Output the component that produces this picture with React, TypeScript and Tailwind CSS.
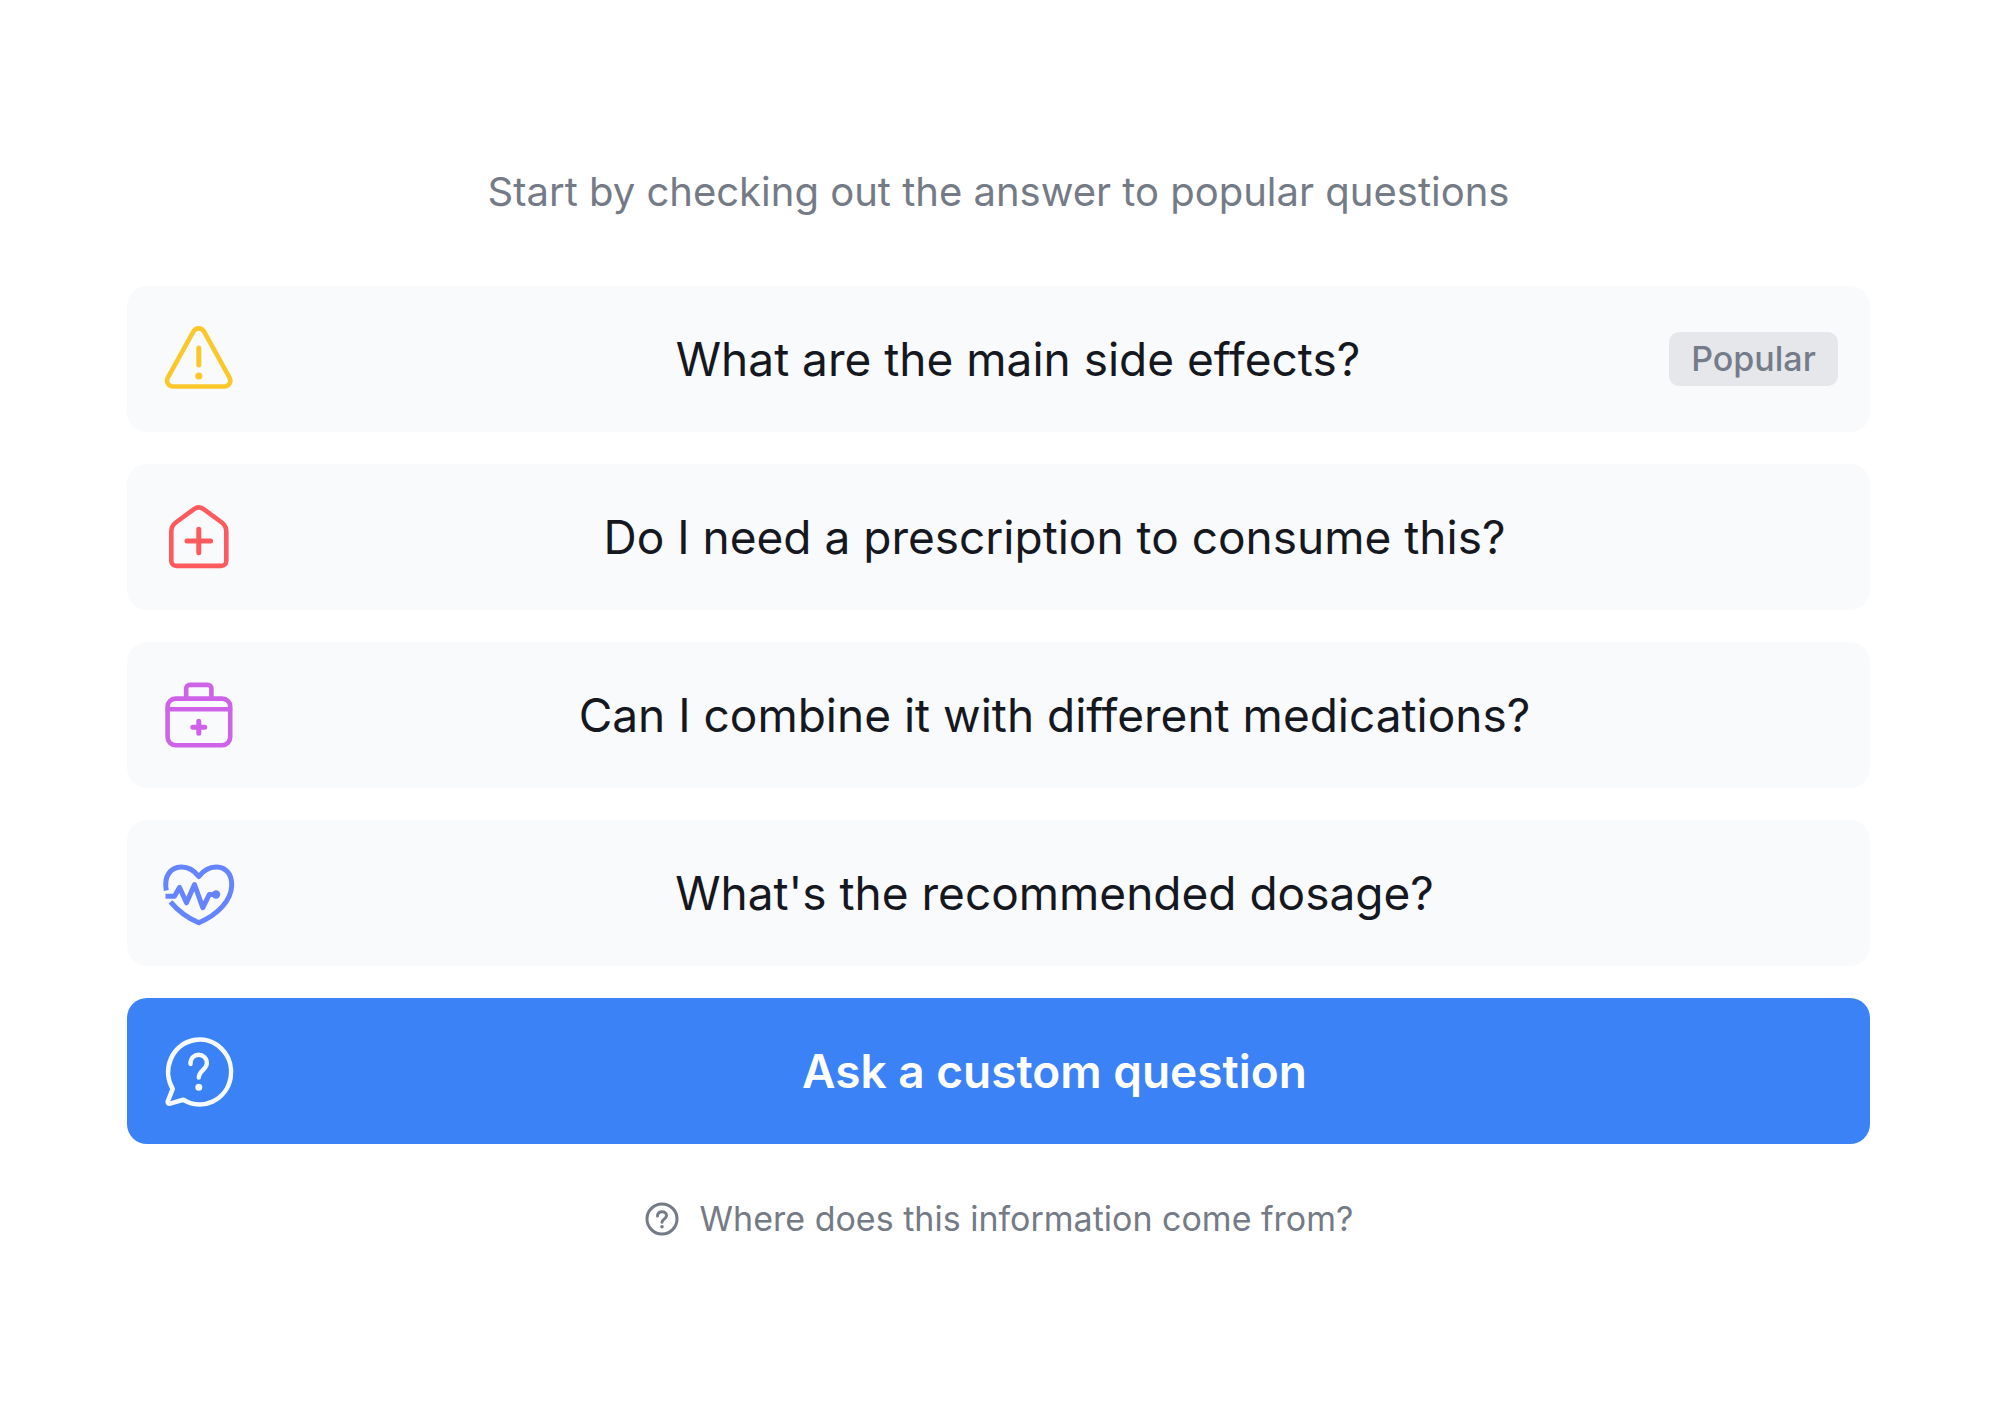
import type { ReactNode } from "react";

function Icon({ className, children }: { className: string; children: ReactNode }) {
  return (
    <svg
      viewBox="0 0 80 80"
      fill="none"
      stroke="currentColor"
      strokeWidth="4.6"
      strokeLinecap="round"
      strokeLinejoin="round"
      aria-hidden="true"
      className={`size-20 shrink-0 ${className}`}
    >
      {children}
    </svg>
  );
}

const WarningIcon = () => (
  <Icon className="text-[#fbc82b]">
    <path d="M34.6 12.2a6 6 0 0 1 10.2 0L70.4 58.4c2.4 4.400-.4 9.100-5.200 9.100H14.200c-4.800 0-7.600-4.700-5.200-9.100Z" />
    <path strokeWidth="5" d="M39.8 29v17" />
    <circle cx="39.8" cy="57" r="3.6" fill="currentColor" stroke="none" />
  </Icon>
);

const PharmacyIcon = () => (
  <Icon className="text-[#fc5a5e]">
    <path d="M12.3 34.500q0-5.500 4.500-9L35 12.100q4.800-3.400 9.600 0L62.800 25.500q4.500 3.500 4.500 9v29.400a5 5 0 0 1-5 5h-45a5 5 0 0 1-5-5Z" />
    <path strokeWidth="5" d="M28 44h23.600M39.800 32.300v23.400" />
  </Icon>
);

const KitIcon = () => (
  <Icon className="text-[#ce63ea]">
    <rect x="8.6" y="23.600" width="62.600" height="46.600" rx="8" />
    <path d="M8.600 34.200h62.600M27.200 23.300V13.500a3.600 3.600 0 0 1 3.600-3.600h18a3.600 3.600 0 0 1 3.600 3.600v9.800" />
    <path strokeWidth="5" d="M33.800 52.200h12M39.800 46.200v12" />
  </Icon>
);

const HeartIcon = () => (
  <Icon className="text-[#6684fd]">
    <path
      strokeLinecap="butt"
      strokeWidth="5"
      d="M7.300 37.500C4.500 22.500 12 14.300 22 14c7.500-.2 12.500 2.500 17.800 9.500 5.300-7 10.300-9.700 17.800-9.500C68 14.300 73 22.500 72.700 32.500 72.300 47.500 59 61.500 39.800 69.800 29 65 19.500 58.500 11.500 48.800"
    />
    <path strokeLinecap="butt" strokeWidth="5" d="M6.500 43.200h9l5-8.700 7 15.300 8-18.300 8.300 23.200L50.300 41.500H57" />
    <circle cx="57" cy="41.500" r="4.200" fill="currentColor" stroke="none" />
  </Icon>
);

const ChatIcon = () => (
  <Icon className="text-[#f6f9ff]">
    <path d="M13.700 57.800A31.500 32.400 0 1 1 24.300 68.700L11 72.600q-2.600.4-2.300-2Z" />
    <path strokeWidth="4.400" d="M31.500 33c-.3-12.500 16.700-12 16.300-.5-.2 6-8 7.500-8 14" />
    <circle cx="39.800" cy="56.300" r="3.500" fill="currentColor" stroke="none" />
  </Icon>
);

const questions = [
  { text: "What are the main side effects?", icon: <WarningIcon />, badge: "Popular" },
  { text: "Do I need a prescription to consume this?", icon: <PharmacyIcon /> },
  { text: "Can I combine it with different medications?", icon: <KitIcon /> },
  { text: "What's the recommended dosage?", icon: <HeartIcon /> },
];

export default function App() {
  return (
    <main className="min-h-screen bg-white pt-40 pr-[130px] pb-20 pl-[127px] text-center font-['Inter',sans-serif]">
      <h1 className="text-[40px] leading-[64px] text-[#747b86]">
        Start by checking out the answer to popular questions
      </h1>
      <div className="mt-[62px] flex flex-col gap-8">
        {questions.map((q) => (
          <button
            key={q.text}
            type="button"
            className="flex w-full cursor-pointer items-center rounded-[20px] bg-[#f9fafc] px-8 py-[33px] text-[#15181f]"
          >
            {q.icon}
            <span className="ml-8 flex-1 text-[46px] leading-[64px]">{q.text}</span>
            {q.badge && (
              <span className="-ml-24 w-[169px] rounded-[10px] bg-[#e5e7eb] text-[34px] leading-[54px] font-medium text-[#757c89]">
                {q.badge}
              </span>
            )}
          </button>
        ))}
        <button
          type="button"
          className="flex w-full cursor-pointer items-center rounded-[20px] bg-[#3b82f6] px-8 py-[33px] text-white"
        >
          <ChatIcon />
          <span className="ml-8 flex-1 text-[46px] leading-[64px] font-semibold">Ask a custom question</span>
        </button>
      </div>
      <a href="#sources" className="mt-[50px] inline-flex items-center gap-5 text-[34px] leading-[50px] text-[#747b86]">
        <svg viewBox="0 0 36 36" fill="none" stroke="currentColor" strokeLinecap="round" aria-hidden="true" className="size-9">
          <circle cx="18" cy="18" r="15" strokeWidth="3" />
          <path strokeWidth="3" d="M13.500 15c0-5.800 9-5.500 9-.3 0 3.300-4.500 3.500-4.500 6.600" />
          <circle cx="18" cy="25.800" r="1.800" fill="currentColor" stroke="none" />
        </svg>
        <span>Where does this information come from?</span>
      </a>
    </main>
  );
}
